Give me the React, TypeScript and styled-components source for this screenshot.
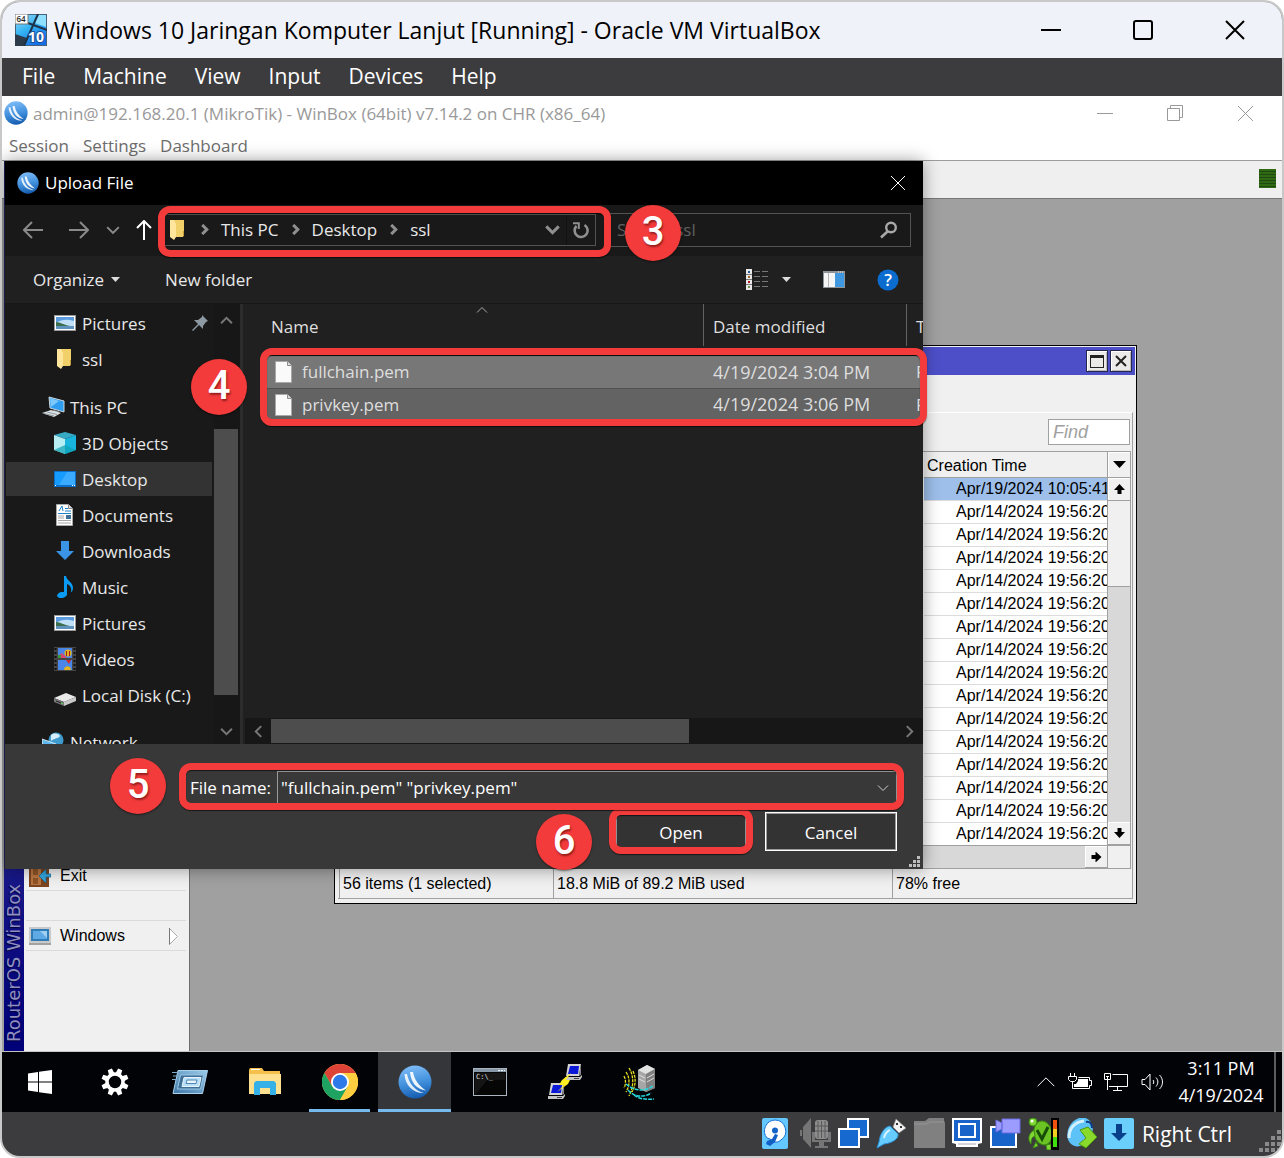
import React, { ReactNode } from 'react';
import styled, { createGlobalStyle, css } from 'styled-components';

const UI = `"Open Sans", "Noto Sans", sans-serif`;
const CLASSIC = `"Liberation Sans", Arial, sans-serif`;
const RED = '#f33b3b';

const GlobalStyle = createGlobalStyle`
  *, *::before, *::after { box-sizing: border-box; }
  body { margin: 0; background: #fff; font-family: ${UI}; }
  button, input { font: inherit; color: inherit; margin: 0; padding: 0; border: 0; background: none; border-radius: 0; }
  svg { display: block; flex: none; }
`;

/* ---------- host window ---------- */

const Frame = styled.div`
  height: 100vh;
  display: flex;
  flex-direction: column;
  border: 2px solid #c8c8c8;
  border-radius: 20px;
  overflow: hidden;
  background: #3c3c3e;
`;

const HostTitle = styled.header`
  display: flex;
  align-items: center;
  height: 56px;
  flex: none;
  padding: 0 37px 0 13px;
  gap: 7px;
  background: #f0f2f9;
  color: #000;
`;

const HostName = styled.h1`
  flex: 1;
  margin: 0;
  font-size: 23px;
  line-height: 32px;
  font-weight: 400;
  white-space: nowrap;
`;

const Controls = styled.div<{ $gap: number }>`
  display: flex;
  align-items: center;
  gap: ${(p) => p.$gap}px;
`;

const IconButton = styled.button`
  display: flex;
  align-items: center;
  justify-content: center;
`;

const HostMenu = styled.nav`
  display: flex;
  align-items: center;
  height: 38px;
  flex: none;
  gap: 28px;
  padding: 0 0 2px 20px;
  font-size: 21px;
  line-height: 28px;
  color: #fff;
`;

const Guest = styled.main`
  position: relative;
  flex: 1;
  min-height: 0;
  display: flex;
  flex-direction: column;
  background: #a0a0a0;
`;

/* ---------- WinBox ---------- */

const BoxTitle = styled.div`
  display: flex;
  align-items: center;
  height: 34px;
  flex: none;
  gap: 5px;
  padding: 0 28px 0 2px;
  background: #fff;
  color: #999;
  font-size: 17px;
`;

const Grow = styled.span`
  flex: 1;
  white-space: nowrap;
`;

const BoxMenu = styled.nav`
  display: flex;
  align-items: center;
  height: 30px;
  flex: none;
  gap: 14px;
  padding: 2px 0 0 7px;
  background: #fff;
  color: #6d6d6d;
  font-size: 17px;
  line-height: 24px;
`;

const BoxToolbar = styled.div`
  display: flex;
  align-items: center;
  justify-content: flex-end;
  height: 39px;
  flex: none;
  padding: 0 6px 2px 0;
  background: #efefef;
  border-top: 1px solid #9c9c9c;
  border-bottom: 1px solid #767676;
`;

const CpuMeter = styled.div`
  width: 17px;
  height: 19px;
  background: repeating-linear-gradient(#2f6a12 0 2px, #1f4a14 2px 3px);
`;

const Workspace = styled.div`
  flex: 1;
  min-height: 0;
  display: flex;
  padding-left: 2px;
  border-bottom: 1px solid #c4c4c4;
  background: #a0a0a0;
`;

const Brand = styled.div`
  width: 20px;
  padding-top: 9px;
  writing-mode: vertical-rl;
  transform: rotate(180deg);
  background: linear-gradient(#000078, #000078 18px, #181888 180px);
  color: #8f8fbd;
  font-family: "DejaVu Sans", sans-serif;
  font-size: 18px;
  line-height: 20px;
  text-shadow: -1px -1px 1px #00003c;
  white-space: nowrap;
`;

const SideMenu = styled.div`
  display: flex;
  flex-direction: column;
  justify-content: flex-end;
  gap: 29px;
  width: 166px;
  padding: 0 3px 100px 2px;
  background: #f0f0f0;
  border-right: 1px solid #6e6e6e;
`;

const SideItem = styled.button`
  display: flex;
  align-items: center;
  gap: 9px;
  height: 31px;
  padding: 1px 8px 0 3px;
  border-top: 1px solid #dadada;
  border-bottom: 1px solid #dadada;
  color: #000;
  font-family: ${CLASSIC};
  font-size: 16px;
  text-align: left;
`;

/* ---------- file list window ---------- */

const FileWindow = styled.section`
  position: absolute;
  left: 332px;
  top: 249px;
  width: 803px;
  height: 559px;
  display: flex;
  flex-direction: column;
  padding: 1px;
  background: #f0f0f0;
  border: 1px solid #000;
  color: #000;
  font-family: ${CLASSIC};
  font-size: 16px;
`;

const FileWindowTitle = styled.div`
  display: flex;
  align-items: center;
  justify-content: flex-end;
  gap: 2px;
  height: 28px;
  flex: none;
  padding-right: 3px;
  background: #4d4fc9;
`;

const BevelButton = styled.button`
  display: flex;
  align-items: center;
  justify-content: center;
  width: 22px;
  height: 22px;
  background: #ece9e9;
  border: 1px solid #26264c;
  box-shadow: inset 1px 1px #fff, inset -1px -1px #b8b8b8;
`;

const Pane = styled.div`
  flex: 1;
  min-height: 0;
  display: flex;
  flex-direction: column;
  margin: 37px 2px 3px;
  padding-right: 1px;
  border-top: 1px solid #fff;
  border-right: 1px solid #a0a0a0;
  border-bottom: 1px solid #a0a0a0;
`;

const FindRow = styled.div`
  display: flex;
  justify-content: flex-end;
  height: 38px;
  flex: none;
  padding: 6px 1px 0 0;
`;

const FindInput = styled.input`
  width: 82px;
  height: 26px;
  padding: 0 4px;
  background: #fff;
  border: 1px solid #a0a0a0;
  font-size: 18px;
  font-style: italic;
  &::placeholder { color: #a0a0a0; opacity: 1; }
`;

const Grid = styled.div`
  display: grid;
  grid-template-columns: 1fr 23px;
  grid-template-rows: 1fr 23px;
  flex: 1;
  min-height: 0;
  border: solid #a0a0a0;
  border-width: 1px 1px 1px 0;
`;

const Rows = styled.div`
  overflow: hidden;
  background: #fff;
`;

const StampTable = styled.table`
  width: 183px;
  margin-left: auto;
  border-collapse: separate;
  border-spacing: 0;
  table-layout: fixed;
  white-space: nowrap;
  th {
    height: 26px;
    padding: 2px 0 0 3px;
    background: #f0f0f0;
    border-bottom: 1px solid #a0a0a0;
    font-weight: 400;
    text-align: left;
  }
`;

const StampCell = styled.td<{ $selected: boolean }>`
  height: 23px;
  padding: 0 0 0 32px;
  overflow: hidden;
  line-height: 20px;
  background: ${(p) => (p.$selected ? '#9dbfea' : '#fff')};
  border-bottom: 1px solid #dcdcdc;
`;

const VBar = styled.div`
  display: flex;
  flex-direction: column;
  background: #d8d8d8;
  border-left: 1px solid #a0a0a0;
`;

const BarButton = styled.button<{ $h?: number }>`
  display: flex;
  align-items: center;
  justify-content: center;
  width: 22px;
  height: ${(p) => p.$h ?? 23}px;
  flex: none;
  background: #f0f0f0;
  border-bottom: 1px solid #a0a0a0;
  box-shadow: inset 1px 1px #fff;
`;

const VThumb = styled.div`
  height: 86px;
  background: #f0f0f0;
  border-bottom: 1px solid #a0a0a0;
`;

const Track = styled.div`
  flex: 1;
`;

const HBar = styled.div`
  display: flex;
  justify-content: flex-end;
  background: #d8d8d8;
  border-top: 1px solid #a0a0a0;
`;

const Corner = styled.div`
  background: #f0f0f0;
  border-top: 1px solid #a0a0a0;
  border-left: 1px solid #a0a0a0;
`;

const StatusRow = styled.div`
  display: grid;
  grid-template-columns: 214px 339px 1fr;
  height: 29px;
  flex: none;
  padding: 0 0 2px 1px;
`;

const StatusCell = styled.span`
  padding: 0 3px;
  line-height: 29px;
  border-left: 1px solid #a0a0a0;
`;

/* ---------- upload dialog ---------- */

const Dialog = styled.section`
  position: absolute;
  left: 2px;
  top: 65px;
  width: 919px;
  height: 708px;
  display: flex;
  flex-direction: column;
  border-left: 1px solid #1c1c48;
  background: #202020;
  box-shadow: 0 0 16px rgba(0, 0, 0, 0.4);
  color: #e8e8e8;
  font-size: 17px;
  line-height: 24px;
`;

const DialogTitle = styled.header`
  display: flex;
  align-items: center;
  height: 44px;
  flex: none;
  gap: 6px;
  padding: 0 17px 0 12px;
  background: #000;
  color: #fff;
`;

const NavRow = styled.div`
  display: flex;
  align-items: center;
  height: 51px;
  flex: none;
  padding: 0 12px 2px 18px;
  background: #191919;
`;

const NavButtons = styled.div`
  display: grid;
  grid-template-columns: 46px 37px 28px 20px;
  justify-items: start;
  align-items: center;
  width: 131px;
  margin-right: 10px;
`;

const Address = styled.div`
  display: flex;
  align-items: center;
  width: 432px;
  height: 32px;
  padding-left: 4px;
  border: 1px solid #535353;
`;

const Crumbs = styled.div`
  display: flex;
  align-items: center;
  flex: 1;
  margin-left: 14px;
`;

const Crumb = styled.button`
  padding: 0 11px;
`;

const RefreshCell = styled.div`
  display: flex;
  align-items: center;
  height: 30px;
  margin-left: 6px;
  padding: 0 5px;
  border-left: 1px solid #111;
`;

const SearchBox = styled.label`
  display: flex;
  align-items: center;
  flex: 1;
  height: 34px;
  margin-left: 10px;
  padding: 0 12px 0 10px;
  border: 1px solid #535353;
  input { flex: 1; min-width: 0; }
  input::placeholder { color: #606060; opacity: 1; }
`;

const ToolRow = styled.div`
  display: flex;
  align-items: center;
  height: 48px;
  flex: none;
  gap: 45px;
  padding: 0 24px 0 28px;
  border-bottom: 1px solid #171717;
`;

const ToolButton = styled.button<{ $gap?: number }>`
  display: flex;
  align-items: center;
  gap: ${(p) => p.$gap ?? 7}px;
`;

const Body = styled.div`
  display: flex;
  flex: 1;
  min-height: 0;
  overflow: hidden;
`;

const Tree = styled.div`
  width: 209px;
  padding: 1px 2px 0 0;
  background: #191919;
  overflow: hidden;
`;

const TreeGroup = styled.div`
  display: flex;
  flex-direction: column;
  margin-bottom: 12px;
`;

const TreeItem = styled.button<{ $root?: boolean; $selected?: boolean }>`
  display: flex;
  align-items: center;
  gap: ${(p) => (p.$root ? 5 : 6)}px;
  height: 34px;
  margin: 1px 0 1px 1px;
  padding: 0 4px 0 ${(p) => (p.$root ? 36 : 48)}px;
  text-align: left;
  white-space: nowrap;
  ${(p) => p.$selected && css`background: #333;`}
`;

const TreeLabel = styled.span`
  flex: 1;
  padding-top: 1px;
`;

const TreeScroll = styled.div`
  display: flex;
  flex-direction: column;
  width: 26px;
  background: #171717;
`;

const ScrollArrow = styled.button<{ $w: number; $h: number }>`
  display: flex;
  align-items: center;
  justify-content: center;
  flex: none;
  width: ${(p) => p.$w}px;
  height: ${(p) => p.$h}px;
`;

const TreeGap = styled.div`
  height: 92px;
`;

const TreeThumb = styled.div`
  width: 24px;
  height: 266px;
  background: #4d4d4d;
`;

const Splitter = styled.div`
  width: 3px;
  background: #2c2c2c;
`;

const Content = styled.div`
  flex: 1;
  min-width: 0;
  display: flex;
  flex-direction: column;
`;

const FileArea = styled.div`
  flex: 1;
  min-height: 0;
  padding-left: 24px;
  overflow: hidden;
`;

const FileTable = styled.table`
  width: 100%;
  table-layout: fixed;
  border-collapse: collapse;
  white-space: nowrap;
  text-align: left;
  th, td { padding: 0; overflow: hidden; font-weight: 400; }
  th { height: 52px; vertical-align: top; color: #dedede; }
  td { height: 32px; padding: 1px 0 0 9px; color: #dedede; }
  td:first-child { padding-left: 8px; }
`;

const DateText = styled.time`
  font-size: 18px;
`;

const HeadCell = styled.div<{ $pad: number; $last?: boolean }>`
  position: relative;
  height: 42px;
  padding-left: ${(p) => p.$pad}px;
  line-height: 46px;
  ${(p) => !p.$last && css`border-right: 1px solid #636363;`}
`;

const SortMark = styled.span`
  position: absolute;
  top: 0;
  left: 48%;
`;

const FileTr = styled.tr<{ $hover?: boolean }>`
  background: ${(p) => (p.$hover ? '#777' : '#636363')};
  border-bottom: 1px solid #505050;
`;

const FileName = styled.div`
  display: flex;
  align-items: center;
  gap: 9px;
`;

const HScroll = styled.div`
  display: flex;
  height: 26px;
  flex: none;
  margin-left: 2px;
  background: #171717;
`;

const HThumb = styled.div`
  width: 418px;
  height: 24px;
  margin-top: 1px;
  background: #4d4d4d;
`;

const Footer = styled.footer`
  display: flex;
  flex-direction: column;
  gap: 8px;
  height: 125px;
  flex: none;
  padding: 27px 26px 0 185px;
  background: #383838;
  color: #fff;
`;

const FieldRow = styled.div`
  display: flex;
  align-items: center;
  height: 33px;
`;

const FieldLabel = styled.label`
  width: 87px;
`;

const Combo = styled.div`
  display: flex;
  align-items: center;
  flex: 1;
  height: 33px;
  padding: 0 7px 0 3px;
  border: 1px solid #9b9b9b;
  input { flex: 1; min-width: 0; padding-top: 1px; outline: none; }
`;

const ButtonRow = styled.div`
  display: flex;
  justify-content: flex-end;
  gap: 18px;
`;

const DialogButton = styled.button`
  width: 132px;
  height: 39px;
  padding-top: 2px;
  background: #333;
  border: 1px solid #fff;
  box-shadow: inset 0 0 0 1px #9b9b9b;
  text-align: center;
`;

const Grip = styled.span`
  position: absolute;
  right: 3px;
  bottom: 2px;
`;

/* ---------- annotations over the dialog ---------- */

const Highlight = styled.div<{ $x: number; $y: number; $w: number; $h: number }>`
  position: absolute;
  left: ${(p) => p.$x}px;
  top: ${(p) => p.$y}px;
  width: ${(p) => p.$w}px;
  height: ${(p) => p.$h}px;
  border: 7px solid ${RED};
  border-radius: 12px;
  box-shadow: 0 1px 1px rgba(0, 0, 0, 0.6), inset 0 1px 1px rgba(0, 0, 0, 0.6);
  pointer-events: none;
`;

const Badge = styled.div<{ $x: number; $y: number }>`
  position: absolute;
  left: ${(p) => p.$x}px;
  top: ${(p) => p.$y}px;
  width: 56px;
  height: 56px;
  border-radius: 50%;
  background: ${RED};
  box-shadow: 0 1px 2px rgba(0, 0, 0, 0.5);
  color: #fff;
  font-family: Roboto, sans-serif;
  font-size: 40px;
  line-height: 54px;
  font-weight: 500;
  text-align: center;
  text-shadow: 1px 2px 2px rgba(60, 0, 0, 0.5);
`;

/* ---------- taskbar and host status ---------- */

const Taskbar = styled.div`
  display: flex;
  align-items: stretch;
  height: 60px;
  flex: none;
  background: #020307;
  color: #fff;
`;

const Apps = styled.div`
  display: flex;
  flex: 1;
  gap: 2px;
  padding-left: 1px;
`;

const AppButton = styled.button<{ $open?: boolean; $active?: boolean }>`
  position: relative;
  display: flex;
  align-items: center;
  justify-content: center;
  width: 73px;
  background: ${(p) => (p.$active ? '#35363a' : 'transparent')};
  ${(p) =>
    (p.$open || p.$active) &&
    css`
      &::after {
        content: '';
        position: absolute;
        left: ${p.$active ? 0 : 6}px;
        right: ${p.$active ? 0 : 6}px;
        bottom: 0;
        height: 3px;
        background: #76b9ed;
      }
    `}
`;

const Tray = styled.div`
  display: flex;
  align-items: center;
  gap: 12px;
  padding-right: 4px;
`;

const Clock = styled.div`
  display: flex;
  flex-direction: column;
  justify-content: center;
  width: 106px;
  font-size: 18px;
  line-height: 27px;
  text-align: center;
`;

const ShowDesktop = styled.button`
  align-self: stretch;
  width: 8px;
  border-left: 2px solid #5c5c5c;
`;

const HostStatus = styled.footer`
  position: relative;
  display: flex;
  align-items: center;
  justify-content: flex-end;
  gap: 7px;
  height: 44px;
  flex: none;
  padding-right: 50px;
  color: #fff;
  font-size: 21px;
  line-height: 28px;
`;

const StatusGrid = styled.div`
  display: grid;
  grid-template-columns: repeat(10, 31px);
  gap: 7px;
`;

const CornerGrip = styled.span`
  position: absolute;
  right: 0;
  bottom: 3px;
`;

/* ---------- drawings ---------- */

const Svg = ({ w, h, vb, children }: { w: number; h: number; vb?: string; children?: ReactNode }) => (
  <svg width={w} height={h} viewBox={vb ?? `0 0 ${w} ${h}`} fill="none" aria-hidden="true">
    {children}
  </svg>
);

const Cross = ({ size, color, width = 1 }: { size: number; color: string; width?: number }) => (
  <Svg w={size} h={size}>
    <path d={`M1 1L${size - 1} ${size - 1}M${size - 1} 1L1 ${size - 1}`} stroke={color} strokeWidth={width} />
  </Svg>
);

const Chevron = ({ dir, size, color, width = 2 }: { dir: 'up' | 'down' | 'left' | 'right'; size: number; color: string; width?: number }) => {
  const d = { up: 'M1 8.500L6 3.500L11 8.500', down: 'M1 3.500L6 8.500L11 3.500', left: 'M8.500 1L3.500 6L8.500 11', right: 'M3.500 1L8.500 6L3.500 11' }[dir];
  return (
    <Svg w={size} h={size} vb="0 0 12 12">
      <path d={d} stroke={color} strokeWidth={(width * 12) / size} />
    </Svg>
  );
};

const MikroTik = ({ size, id }: { size: number; id: string }) => (
  <Svg w={size} h={size} vb="0 0 34 34">
    <defs>
      <linearGradient id={id} x1="0.4" y1="0" x2="0.6" y2="1">
        <stop offset="0" stopColor="#7dbcf8" />
        <stop offset="0.55" stopColor="#3f8edb" />
        <stop offset="1" stopColor="#1259ad" />
      </linearGradient>
    </defs>
    <circle cx="17" cy="17" r="16.500" fill={`url(#${id})`} />
    <path d="M6.500 9C7 20 15 28.500 26 28C17 25.500 11 19 9 9z" fill="#fff" opacity="0.85" />
    <path d="M12 7C13 17 18 24.500 28 25.500C21 21 16.500 15 15 7z" fill="#fff" opacity="0.9" />
  </Svg>
);

const VmIcon = () => (
  <Svg w={32} h={32}>
    <defs>
      <linearGradient id="vm" x1="0" y1="0" x2="0.6" y2="1">
        <stop offset="0" stopColor="#9fdcfa" />
        <stop offset="0.5" stopColor="#35b4f3" />
        <stop offset="1" stopColor="#1570e8" />
      </linearGradient>
    </defs>
    <rect x="0.500" y="0.500" width="31" height="31" fill="url(#vm)" stroke="#45627a" />
    <path d="M0 20l12 4 -3 8H0z" fill="#2d3a49" />
    <path d="M24 1h7v12l-11-4z" fill="#8fe0ff" />
    <path d="M13 9l19 7M23 0L9 32" stroke="#1d3147" strokeWidth="2" />
    <rect width="13" height="10" fill="#fff" stroke="#777" />
    <text x="1.500" y="8" fontFamily="Open Sans" fontSize="8" fontWeight="600" fill="#222">64</text>
    <text x="13" y="28" fontFamily="Open Sans" fontSize="14" fontWeight="700" fill="#fff" stroke="#1d4f94" strokeWidth="2" paintOrder="stroke">10</text>
  </Svg>
);

const FolderMini = () => (
  <Svg w={16} h={22}>
    <path d="M5 1h10v15l-1 2H5z" fill="#f1cf69" />
    <path d="M1 1h4l2 4v13l-2 3-4-3z" fill="#ffe69c" />
    <path d="M14 12h1v5h-1z" fill="#c99d3c" />
  </Svg>
);

const TreeFolderIcon = () => (
  <Svg w={22} h={22}>
    <path d="M7 1h10v15l-1 2H7z" fill="#f1cf69" />
    <path d="M3 1h4l2 4v13l-2 3-4-3z" fill="#ffe69c" />
    <path d="M16 12h1v5h-1z" fill="#c99d3c" />
  </Svg>
);

const PictureIcon = () => (
  <Svg w={22} h={16}>
    <rect x="0.500" y="0.500" width="21" height="15" fill="#fff" stroke="#9a9a9a" />
    <rect x="2" y="2" width="18" height="12" fill="#5b9be0" />
    <path d="M2 8c6-4 11-4 18-2v5H2z" fill="#bfe0f7" />
    <path d="M2 7c4 0 8 3 14 4H2z" fill="#3c6e4c" />
    <path d="M2 11h18v3H2z" fill="#5f93bd" />
  </Svg>
);

const PcIcon = () => (
  <Svg w={23} h={22}>
    <path d="M7 1l15 4v11L8 12z" fill="#2f9df0" stroke="#cbd8e0" />
    <path d="M8 2l9 3-8 6z" fill="#7cc8fa" />
    <path d="M12 14l6 2-2 2-6-2z" fill="#8b949b" />
    <path d="M0 17l9-3 10 3-7 4z" fill="#dce1e4" />
    <path d="M2 17.500l10 2.500M5 16l10 2.500" stroke="#8b949b" />
  </Svg>
);

const CubeIcon = () => (
  <Svg w={22} h={22}>
    <path d="M11 0l11 3-11 4L0 3z" fill="#36a9c4" />
    <path d="M0 3l11 4v15L0 18z" fill="#b7eef3" />
    <path d="M22 3L11 7v15l11-4z" fill="#18b4dd" />
    <path d="M0 18l11-5 11 5-11 4z" fill="#0a9fb4" opacity="0.7" />
  </Svg>
);

const DesktopIcon = () => (
  <Svg w={22} h={16}>
    <rect width="22" height="16" fill="#0a6fc9" />
    <rect x="1" y="1" width="20" height="13" fill="#169bff" />
    <path d="M13 1h8v13H5z" fill="#3babff" />
    <path d="M1 14h1v1H1zM18 14h1v1h-1zM20 14h1v1h-1z" fill="#fff" />
  </Svg>
);

const DocIcon = () => (
  <Svg w={22} h={22}>
    <path d="M2.500 .5h12l4 4v17h-16z" fill="#fff" stroke="#aaa" />
    <path d="M14.500 .5v4h4" stroke="#888" fill="#ddd" />
    <path d="M5 7l3-5 1 5M11 4.500h3M11 7h6M4 9.500h13" stroke="#1c7fc7" />
    <path d="M4 12h6M4 14h6M4 16.500h13M4 19h13" stroke="#a6a6a6" />
    <rect x="12" y="11" width="5" height="4" fill="#3d6f96" />
  </Svg>
);

const DownIcon = () => (
  <Svg w={22} h={20}>
    <path d="M7 0h8v10h5L11 19 2 10h5z" fill="#3a93e4" />
  </Svg>
);

const MusicIcon = () => (
  <Svg w={22} h={22}>
    <ellipse cx="8" cy="19" rx="5" ry="3" fill="#0a9cf5" transform="rotate(-12 8 19)" />
    <path d="M10 0h2c1 5 7 6 7 12 0 2-1 4-2 4 1-4-1-7-4-8v11h-3z" fill="#0a9cf5" />
  </Svg>
);

const VideoIcon = () => (
  <Svg w={22} h={24}>
    <rect width="22" height="24" fill="#454545" />
    <path d="M1.500 1v22M20.500 1v22" stroke="#111" strokeWidth="2" strokeDasharray="2 2" />
    <rect x="4" y="1" width="14" height="10" fill="#4a86e8" />
    <rect x="4" y="13" width="14" height="10" fill="#4a86e8" />
    <circle cx="14" cy="6" r="3.500" fill="#e4b322" />
    <path d="M12 4h1v5h-1zM15 4h1v5h-1z" fill="#a02020" />
    <path d="M4 9l4-3 5 5H4z" fill="#d8496b" />
    <path d="M4 8h3v3H4z" fill="#3c9b3c" />
    <path d="M12 13h5l-2 4z" fill="#d12a2a" />
    <path d="M10 23c0-5 7-5 7 0z" fill="#e4b322" />
  </Svg>
);

const DiskIcon = () => (
  <Svg w={22} h={22}>
    <path d="M0 14l12-5 10 4-12 5z" fill="#e9e9e9" />
    <path d="M0 14l10 4v4L0 18z" fill="#777" />
    <path d="M10 18l12-5v4l-12 5z" fill="#c9c9c9" />
    <path d="M2 17l5 2" stroke="#222" />
    <path d="M7 19h2v1H7z" fill="#4fd04f" />
  </Svg>
);

const NetIcon = () => (
  <Svg w={23} h={22}>
    <circle cx="14" cy="9" r="7.500" fill="#3f9bce" />
    <path d="M9 4c4-3 8-1 9 1-2 3-6 2-9 5z" fill="#d5eefa" />
    <path d="M0 8l14 5v8L1 17z" fill="#5cb8ef" stroke="#cfe3ee" />
  </Svg>
);

const PinIcon = () => (
  <Svg w={16} h={16}>
    <path d="M10 0l6 6-2 1-3 4v3l-4-4-6 6-1-1 6-6-4-4h4l4-3z" fill="#8d99a3" />
  </Svg>
);

const FileIcon = () => (
  <Svg w={18} h={22}>
    <path d="M.5.500h12l4 4v17H.5z" fill="#fafafa" stroke="#a8a8a8" />
    <path d="M12.500.500v4h4" fill="#ddd" stroke="#8c8c8c" />
  </Svg>
);

const ArrowIcon = ({ dir, color }: { dir: 'left' | 'right' | 'up'; color: string }) => {
  const d = { left: 'M20 10H1M9 2L1 10l8 8', right: 'M0 10h19M11 2l8 8-8 8', up: 'M10 20V1M3 8l7-7 7 7' }[dir];
  return (
    <Svg w={20} h={20}>
      <path d={d} stroke={color} strokeWidth="2" />
    </Svg>
  );
};

const Caret = ({ color }: { color: string }) => (
  <Svg w={9} h={5}>
    <path d="M0 0h9L4.500 5z" fill={color} />
  </Svg>
);

const StubArrow = ({ turn }: { turn: number }) => (
  <Svg w={11} h={10} vb="0 0 11 10">
    <path d="M5.500 0L11 6H7.500v4h-4V6H0z" fill="#000" transform={`rotate(${turn} 5.500 5)`} />
  </Svg>
);

const ViewIcon = () => (
  <Svg w={22} h={21}>
    <rect width="6" height="21" fill="#e8e8e8" />
    <path d="M2 2h2v2H2z" fill="#2a5d92" />
    <path d="M2 7h2v2H2z" fill="#a0662c" />
    <path d="M2 12h2v2H2z" fill="#b01c1c" />
    <path d="M2 17h2v2H2z" fill="#6b9350" />
    <path d="M0 5.500h6M0 10.500h6M0 15.500h6" stroke="#777" />
    <path d="M8 2.500h6M16 2.500h6M8 7.500h6M16 7.500h6M8 12.500h6M16 12.500h6M8 17.500h6M16 17.500h6" stroke="#777" />
  </Svg>
);

const PaneIcon = () => (
  <Svg w={22} h={17}>
    <rect width="22" height="17" fill="#8f9499" />
    <path d="M1 2h11v14H1z" fill="#f5f5f5" />
    <path d="M5.500 2v14" stroke="#b9b9b9" />
    <path d="M12 2h9v14h-9z" fill="#3f97e0" />
    <path d="M15 1h1M17 1h1M19 1h1" stroke="#eee" />
  </Svg>
);

const HelpIcon = () => (
  <Svg w={22} h={22}>
    <circle cx="11" cy="11" r="10.500" fill="#0a6cce" />
    <text x="11" y="17" textAnchor="middle" fontFamily="Open Sans" fontSize="17" fontWeight="600" fill="#fff">?</text>
  </Svg>
);

const SearchIcon = () => (
  <Svg w={18} h={18}>
    <circle cx="11" cy="6.500" r="4.800" stroke="#a8a8a8" strokeWidth="2.400" />
    <path d="M7.500 10.500L1 16.500" stroke="#a8a8a8" strokeWidth="2.600" />
  </Svg>
);

const RefreshIcon = () => (
  <Svg w={18} h={18}>
    <path d="M12.500 4A6.500 6.500 0 1 1 4.500 5" stroke="#8f8f8f" strokeWidth="2.600" />
    <path d="M1 2.200h5.800v5.800" stroke="#8f8f8f" strokeWidth="2" />
  </Svg>
);

const DoorIcon = () => (
  <Svg w={22} h={24}>
    <path d="M0 0h20v23H0z" fill="#7c4420" />
    <path d="M2 2h10v19H2z" fill="#b87541" />
    <path d="M4 5h5v6H4zM4 14h5v6H4z" fill="#8f5426" />
    <path d="M22 13v-3h-5V5l-7 7 7 7v-6z" fill="#35a5dc" stroke="#16648f" strokeWidth="0.700" />
  </Svg>
);

const MonitorIcon = () => (
  <Svg w={22} h={18}>
    <rect width="22" height="18" fill="#c9c9c9" />
    <path d="M0 16h22v2H0z" fill="#a2a2a2" />
    <rect x="2" y="2" width="18" height="12" fill="#2f7db8" />
    <rect x="4" y="4" width="14" height="8" fill="#5fa9e4" />
    <path d="M11 4h7v7z" fill="#9fd0f2" />
  </Svg>
);

const WinLogo = () => (
  <Svg w={24} h={24}>
    <path d="M0 3.500l10-1.500v9.500H0zM11 1.800L24 0v11.500H11zM0 12.500h10V22L0 20.500zM11 12.500h13V24l-13-1.800z" fill="#fff" />
  </Svg>
);

const GearIcon = () => (
  <Svg w={28} h={28} vb="-14 -14 28 28">
    <circle r="8" stroke="#fff" strokeWidth="3.600" />
    {[22.5, 67.5, 112.5, 157.5, 202.5, 247.5, 292.5, 337.5].map((a) => (
      <path key={a} d="M-2.800 -8.500L-2.200 -13.600H2.200L2.800 -8.500z" fill="#fff" transform={`rotate(${a})`} />
    ))}
  </Svg>
);

const RunIcon = () => (
  <Svg w={36} h={24}>
    <defs>
      <linearGradient id="run" x1="0" y1="1" x2="1" y2="0">
        <stop offset="0" stopColor="#3f78a8" />
        <stop offset="1" stopColor="#9ccbea" />
      </linearGradient>
    </defs>
    <path d="M6 .5h29.500l-5 23H1z" fill="url(#run)" stroke="#a9d2ec" />
    <path d="M8.500 5h23l-3 14h-23z" fill="#3f6f97" stroke="#9cc8e6" />
    <path d="M12 7.500h17l-2 9H10z" fill="#b9dff7" stroke="#e6f4fc" />
    <path d="M15 10h10l-1 3.500H14z" fill="#e9f6fd" stroke="#4d86b3" />
    <path d="M0 2.500h7M1 6h5M0 9.500h4" stroke="#7ea9c6" />
  </Svg>
);

const ExplorerIcon = () => (
  <Svg w={32} h={28}>
    <path d="M0 2l1-2h12l2 3h16v5H0z" fill="#f5c04a" />
    <path d="M2 1.500h9" stroke="#fff" />
    <path d="M0 6h32v20H0z" fill="#ffe08f" />
    <path d="M5 27V15l2-2h18l2 2v12h-6v-7H11v7z" fill="#36b1e8" />
  </Svg>
);

const ChromeIcon = () => (
  <Svg w={36} h={36} vb="-18 -18 36 36">
    <circle r="18" fill="#ffcd40" />
    <path d="M-15.600 -9A18 18 0 0 1 15.600 -9H0L-7.800 4.500z" fill="#dd4437" />
    <path d="M-15.600 -9A18 18 0 0 0 0 18L7.800 4.500H0L-7.800 4.500z" fill="#1ea362" />
    <path d="M0 -9H15.600A18 18 0 0 1 0 18L7.800 4.500z" fill="#ffcd40" />
    <circle r="9" fill="#fff" />
    <circle r="7.200" fill="#2d79ea" />
  </Svg>
);

const CmdIcon = () => (
  <Svg w={34} h={28}>
    <rect x="0.500" y="0.500" width="33" height="27" fill="#060606" stroke="#a9b4bf" />
    <path d="M3 26L14 12h18V5H2v21z" fill="#1c1c1c" opacity="0.7" />
    <path d="M1 1h32v3H1z" fill="#8798a8" />
    <path d="M25 2.500h2M28 2.500h2M31 2.500h1" stroke="#fff" />
    <text x="3" y="11" fontFamily="DejaVu Sans Mono" fontSize="7" fill="#ddd">C:\_</text>
  </Svg>
);

const PuttyIcon = () => (
  <Svg w={36} h={36}>
    {[[18, 0], [1, 19]].map(([x, y]) => (
      <g key={x} transform={`translate(${x} ${y})`}>
        <path d="M3 0h13l-2 12H1z" fill="#d4d4d4" />
        <path d="M5 2h9l-1 8H3z" fill="#0b18d8" />
        <path d="M16 0v11l-2 1z" fill="#888" />
        <path d="M0 13h15l2-2v2l-2 3H0z" fill="#c4c4c4" />
        <path d="M9 14.500h5" stroke="#444" />
      </g>
    ))}
    <path d="M24 9l-9 7-3 5h5l-7 7 11-8 2-4h-4z" fill="#ffee20" />
  </Svg>
);

const ServerIcon = () => (
  <Svg w={34} h={37}>
    <path d="M15 6l9-5 8 4v19l-9 4-8-4z" fill="#a6a6a6" />
    <path d="M15 6l9-5 8 4-9 5z" fill="#e2e2e2" />
    <path d="M23 10l9-5v19l-9 4z" fill="#808080" />
    <path d="M16 11l6 3M16 15l6 3M24 14l7-4M24 18l7-4" stroke="#dedede" />
    <path d="M6 4c5 8 5 18 0 28M3 8c4 6 4 13 0 20M10 7c3 7 3 14-1 21M1 12c2 4 2 8 0 12" stroke="#e8e020" strokeWidth="1.300" strokeDasharray="3 1" />
    <path d="M3 20c8 7 18 8 27 2M5 26c6 7 16 8 23 3M11 31c5 4 13 5 20 4" stroke="#27d9df" strokeWidth="1.500" strokeDasharray="4 1" />
  </Svg>
);

const BatteryIcon = () => (
  <Svg w={24} h={18}>
    <path d="M2.500 0v4M6.500 0v4M.5 3.500h8v3l-2 2h-4l-2-2zM4.500 8.500v7h17v-3h2v-5h-2v-3h-11" stroke="#fff" />
    <path d="M10 6h10v8H6v-3h2l2-3z" fill="#fff" />
  </Svg>
);

const EthernetIcon = () => (
  <Svg w={25} h={20}>
    <path d="M8.500 2.500h15v12H5M13.500 14.500v4M9 18.500h9M.5 1.500h6v6h-6zM3.500 4v14M2 4.500h3" stroke="#fff" />
  </Svg>
);

const SoundIcon = () => (
  <Svg w={23} h={20}>
    <path d="M1 7.500h3l5-5.500v16l-5-5.500H1z" stroke="#fff" />
    <path d="M12 8c1 1 1 3 0 4M15 5.500c2.500 3 2.500 6 0 9M18.500 3c4 4 4 10 0 14" stroke="#fff" />
  </Svg>
);

const StatusIcons = () => (
  <StatusGrid>
    <Svg w={26} h={31}>
      <rect width="26" height="31" rx="2" fill="#64c8ff" />
      <path d="M13 2a11 11 0 0 0-8 18l3 1 4 3h4l3-2A11 11 0 0 0 13 2z" fill="#fff" stroke="#1672d4" />
      <circle cx="13" cy="12.500" r="3" fill="#1464c8" />
      <path d="M13 16l3 1-3 7-5 4-4-2 1-3 5-2z" fill="#1260c4" />
    </Svg>
    <Svg w={31} h={31}>
      <path d="M3 9l8-9v30l-8-9zM0 12h2v6H0z" fill="#757575" />
      <rect x="15" y="2" width="13" height="19" rx="3" fill="#8d8d8d" />
      <path d="M18 3v17M21.500 3v17M25 3v17M15 8h13M15 13h13" stroke="#5b5b5b" />
      <path d="M12 14h3v8h13v-8h3v10h-7v4h4v2H15v-2h4v-4h-7z" fill="#767676" />
    </Svg>
    <Svg w={31} h={31}>
      <rect x="10" y="1" width="20" height="18" fill="#1669cf" stroke="#fff" strokeWidth="2" />
      <rect x="1" y="11" width="20" height="18" fill="#1669cf" stroke="#fff" strokeWidth="2" />
    </Svg>
    <Svg w={31} h={31}>
      <path d="M20 1l10 9-7 5-6-6z" fill="#f2f2f2" stroke="#888" strokeWidth="0.600" />
      <path d="M20 5h2v2h-2zM24 8h2v2h-2z" fill="#333" />
      <path d="M14 8l8 8c1 5-6 9-14 10L1 30l2-6C4 16 8 9 14 8z" fill="#66ccff" stroke="#2b8fd6" />
      <path d="M8 20c1-4 3-7 6-8" stroke="#d6f2ff" strokeWidth="2" />
    </Svg>
    <Svg w={31} h={31}>
      <path d="M0 3h11l4-3h15v5h1v25H0z" fill="#808080" />
      <path d="M0 6h12l4-2h15" stroke="#969696" />
    </Svg>
    <Svg w={31} h={31}>
      <path d="M0 0h30v25l-4 1v3H4v-3l-4-1z" fill="#fff" />
      <rect x="2" y="2" width="26" height="21" fill="#1763c9" />
      <rect x="7" y="6" width="16" height="13" stroke="#fff" strokeWidth="2" />
      <path d="M6 26h18" stroke="#aab" />
    </Svg>
    <Svg w={31} h={31}>
      <rect x="1" y="9" width="25" height="20" fill="#1763c9" stroke="#fff" strokeWidth="2" />
      <path d="M12 1h18v14H12zM12 5L6 2v12l6-3z" fill="#9c9cff" stroke="#6a6adf" />
    </Svg>
    <Svg w={32} h={32}>
      <ellipse cx="15" cy="15" rx="9" ry="12" fill="#6cc424" stroke="#3a8a10" transform="rotate(-12 15 15)" />
      <ellipse cx="5" cy="4" rx="4" ry="4" fill="#7fd634" stroke="#3a8a10" />
      <path d="M6 12c-5 3-7 9-3 14 0-5 1-7 4-8zM8 24l-3 6 5-2zM18 27l1 5h4v-6z" fill="#7fd634" stroke="#3a8a10" />
      <path d="M9 12l5 9 6-12" stroke="#164d08" strokeWidth="3" />
      <circle cx="4" cy="3" r="1.500" fill="#fff" />
      <rect x="23" y="0" width="8" height="32" fill="#000" />
      <path d="M25 2h4v9h-4z" fill="#f05010" />
      <path d="M25 11h4v8h-4z" fill="#f3d020" />
      <path d="M25 19h4v10h-4z" fill="#40e010" />
    </Svg>
    <Svg w={31} h={31}>
      <ellipse cx="14" cy="14" rx="12" ry="15" fill="#5cc2f7" transform="rotate(28 14 14)" />
      <path d="M3 20C3 10 9 4 18 3" stroke="#d4f0fd" strokeWidth="3" />
      <path d="M20 4c4-1 6 2 6 6" stroke="#0c3c88" strokeWidth="2" />
      <path d="M14 12l8-3 9 10-11 11-7-4 7-6z" fill="#8ada2c" stroke="#4b9b10" />
    </Svg>
    <Svg w={31} h={31}>
      <rect width="30" height="31" rx="2" fill="#6ad0fb" />
      <path d="M12 6h6v9h5l-8 8-8-8h5z" fill="#08408c" />
    </Svg>
  </StatusGrid>
);

const tree = {
  pinned: [
    { name: 'Pictures', icon: <PictureIcon />, pin: true },
    { name: 'ssl', icon: <TreeFolderIcon />, pin: false },
  ],
  pc: [
    { name: '3D Objects', icon: <CubeIcon /> },
    { name: 'Desktop', icon: <DesktopIcon /> },
    { name: 'Documents', icon: <DocIcon /> },
    { name: 'Downloads', icon: <DownIcon /> },
    { name: 'Music', icon: <MusicIcon /> },
    { name: 'Pictures', icon: <PictureIcon /> },
    { name: 'Videos', icon: <VideoIcon /> },
    { name: 'Local Disk (C:)', icon: <DiskIcon /> },
  ],
};

const crumbs = ['This PC', 'Desktop', 'ssl'];

const stamps = ['Apr/19/2024 10:05:41', ...Array.from({ length: 15 }, () => 'Apr/14/2024 19:56:20')];

const files = [
  { name: 'fullchain.pem', date: '4/19/2024 3:04 PM' },
  { name: 'privkey.pem', date: '4/19/2024 3:06 PM' },
];

const GripDots = ({ size, color }: { size: number; color: string }) => {
  const n = size > 12 ? 4 : 3;
  const step = size / n;
  const dots: number[][] = [];
  for (let r = 0; r < n; r++) for (let c = n - 1 - r; c < n; c++) dots.push([c * step, r * step]);
  return (
    <Svg w={size} h={size}>
      {dots.map(([x, y]) => (
        <rect key={`${x}-${y}`} x={x + 1} y={y + 1} width={n === 4 ? 4 : 3} height={n === 4 ? 4 : 3} fill={color} />
      ))}
    </Svg>
  );
};

const FileListWindow = () => (
  <FileWindow aria-label="File List">
    <FileWindowTitle>
      <BevelButton aria-label="Maximize">
        <Svg w={14} h={13}><rect x="0.500" y="0.500" width="13" height="12" stroke="#222" /><path d="M0 2h14" stroke="#222" strokeWidth="2" /></Svg>
      </BevelButton>
      <BevelButton aria-label="Close"><Cross size={12} color="#222" width={2} /></BevelButton>
    </FileWindowTitle>
    <Pane>
      <FindRow><FindInput placeholder="Find" aria-label="Find" /></FindRow>
      <Grid>
        <Rows>
          <StampTable>
            <thead><tr><th>Creation Time</th></tr></thead>
            <tbody>
              {stamps.map((s, i) => (
                <tr key={i}><StampCell $selected={i === 0}>{s}</StampCell></tr>
              ))}
            </tbody>
          </StampTable>
        </Rows>
        <VBar>
          <BarButton $h={26} aria-label="Columns"><Svg w={13} h={7}><path d="M0 0h13L6.500 7z" fill="#000" /></Svg></BarButton>
          <BarButton aria-label="Scroll up"><StubArrow turn={0} /></BarButton>
          <VThumb />
          <Track />
          <BarButton aria-label="Scroll down"><StubArrow turn={180} /></BarButton>
        </VBar>
        <HBar><BarButton $h={22} aria-label="Scroll right"><StubArrow turn={90} /></BarButton></HBar>
        <Corner />
      </Grid>
      <StatusRow>
        <StatusCell>56 items (1 selected)</StatusCell>
        <StatusCell>18.8 MiB of 89.2 MiB used</StatusCell>
        <StatusCell>78% free</StatusCell>
      </StatusRow>
    </Pane>
  </FileWindow>
);

const UploadDialog = () => (
  <Dialog role="dialog" aria-label="Upload File">
    <DialogTitle>
      <MikroTik size={22} id="mt-dialog" />
      <Grow>Upload File</Grow>
      <IconButton aria-label="Close"><Cross size={16} color="#fff" /></IconButton>
    </DialogTitle>
    <NavRow>
      <NavButtons>
        <IconButton aria-label="Back"><ArrowIcon dir="left" color="#8a8a8a" /></IconButton>
        <IconButton aria-label="Forward"><ArrowIcon dir="right" color="#8a8a8a" /></IconButton>
        <IconButton aria-label="Recent"><Chevron dir="down" size={14} color="#8a8a8a" /></IconButton>
        <IconButton aria-label="Up"><ArrowIcon dir="up" color="#fff" /></IconButton>
      </NavButtons>
      <Address>
        <FolderMini />
        <Crumbs>
          {crumbs.map((c) => (
            <React.Fragment key={c}>
              <Chevron dir="right" size={11} color="#8f8f8f" width={3} />
              <Crumb>{c}</Crumb>
            </React.Fragment>
          ))}
        </Crumbs>
        <IconButton aria-label="Previous locations"><Chevron dir="down" size={15} color="#8f8f8f" width={3} /></IconButton>
        <RefreshCell><IconButton aria-label="Refresh"><RefreshIcon /></IconButton></RefreshCell>
      </Address>
      <SearchBox>
        <input placeholder="Search ssl" aria-label="Search ssl" />
        <SearchIcon />
      </SearchBox>
    </NavRow>
    <ToolRow>
      <ToolButton>Organize <Caret color="#dcdcdc" /></ToolButton>
      <Grow><ToolButton>New folder</ToolButton></Grow>
      <Controls $gap={32}>
        <ToolButton $gap={14} aria-label="View"><ViewIcon /><Caret color="#dcdcdc" /></ToolButton>
        <IconButton aria-label="Preview pane"><PaneIcon /></IconButton>
        <IconButton aria-label="Help"><HelpIcon /></IconButton>
      </Controls>
    </ToolRow>
    <Body>
      <Tree>
        <TreeGroup>
          {tree.pinned.map((t) => (
            <TreeItem key={t.name}>{t.icon}<TreeLabel>{t.name}</TreeLabel>{t.pin && <PinIcon />}</TreeItem>
          ))}
        </TreeGroup>
        <TreeGroup>
          <TreeItem $root><PcIcon /><TreeLabel>This PC</TreeLabel></TreeItem>
          {tree.pc.map((t) => (
            <TreeItem key={t.name} $selected={t.name === 'Desktop'}>{t.icon}<TreeLabel>{t.name}</TreeLabel></TreeItem>
          ))}
        </TreeGroup>
        <TreeItem $root><NetIcon /><TreeLabel>Network</TreeLabel></TreeItem>
      </Tree>
      <TreeScroll>
        <ScrollArrow $w={24} $h={33} aria-label="Scroll up"><Chevron dir="up" size={13} color="#777" /></ScrollArrow>
        <TreeGap />
        <TreeThumb />
        <Grow />
        <ScrollArrow $w={24} $h={26} aria-label="Scroll down"><Chevron dir="down" size={13} color="#777" /></ScrollArrow>
      </TreeScroll>
      <Splitter />
      <Content>
        <FileArea>
          <FileTable>
            <colgroup>
              <col style={{ width: 437 }} />
              <col style={{ width: 203 }} />
              <col />
            </colgroup>
            <thead>
              <tr>
                <th><HeadCell $pad={4}>Name<SortMark><Chevron dir="up" size={12} color="#aaa" width={1} /></SortMark></HeadCell></th>
                <th><HeadCell $pad={9}>Date modified</HeadCell></th>
                <th><HeadCell $pad={9} $last>Type</HeadCell></th>
              </tr>
            </thead>
            <tbody>
              {files.map((f, i) => (
                <FileTr key={f.name} $hover={i === 0}>
                  <td><FileName><FileIcon />{f.name}</FileName></td>
                  <td><DateText>{f.date}</DateText></td>
                  <td>PEM File</td>
                </FileTr>
              ))}
            </tbody>
          </FileTable>
        </FileArea>
        <HScroll>
          <ScrollArrow $w={26} $h={26} aria-label="Scroll left"><Chevron dir="left" size={13} color="#777" /></ScrollArrow>
          <HThumb />
          <Grow />
          <ScrollArrow $w={28} $h={26} aria-label="Scroll right"><Chevron dir="right" size={13} color="#777" /></ScrollArrow>
        </HScroll>
      </Content>
    </Body>
    <Footer>
      <FieldRow>
        <FieldLabel htmlFor="file-name">File name:</FieldLabel>
        <Combo>
          <input id="file-name" defaultValue={'"fullchain.pem" "privkey.pem"'} />
          <IconButton aria-label="File name history"><Chevron dir="down" size={12} color="#d0d0d0" width={1} /></IconButton>
        </Combo>
      </FieldRow>
      <ButtonRow>
        <DialogButton>Open</DialogButton>
        <DialogButton>Cancel</DialogButton>
      </ButtonRow>
    </Footer>
    <Grip><GripDots size={12} color="#bdbdbd" /></Grip>
    <Highlight $x={153} $y={45} $w={453} $h={51} />
    <Highlight $x={255} $y={187} $w={667} $h={78} />
    <Highlight $x={604} $y={647} $w={144} $h={46} />
    <Highlight $x={174} $y={602} $w={725} $h={47} />
    <Badge $x={620} $y={44}>3</Badge>
    <Badge $x={186} $y={198}>4</Badge>
    <Badge $x={105} $y={597}>5</Badge>
    <Badge $x={531} $y={653}>6</Badge>
  </Dialog>
);

export default function App() {
  return (
    <>
      <GlobalStyle />
      <Frame>
        <HostTitle>
          <VmIcon />
          <HostName>Windows 10 Jaringan Komputer Lanjut [Running] - Oracle VM VirtualBox</HostName>
          <Controls $gap={72}>
            <IconButton aria-label="Minimize"><Svg w={20} h={2}><path d="M0 1h20" stroke="#000" strokeWidth="2" /></Svg></IconButton>
            <IconButton aria-label="Maximize"><Svg w={20} h={20}><rect x="1" y="1" width="18" height="18" rx="2" stroke="#000" strokeWidth="2" /></Svg></IconButton>
            <IconButton aria-label="Close"><Cross size={20} color="#000" width={2} /></IconButton>
          </Controls>
        </HostTitle>
        <HostMenu>
          {['File', 'Machine', 'View', 'Input', 'Devices', 'Help'].map((m) => <button key={m}>{m}</button>)}
        </HostMenu>
        <Guest>
          <BoxTitle>
            <MikroTik size={24} id="mt-title" />
            <Grow>admin@192.168.20.1 (MikroTik) - WinBox (64bit) v7.14.2 on CHR (x86_64)</Grow>
            <Controls $gap={54}>
              <IconButton aria-label="Minimize"><Svg w={16} h={1}><path d="M0 .5h16" stroke="#999" /></Svg></IconButton>
              <IconButton aria-label="Restore"><Svg w={16} h={16}><path d="M.5 3.500h12v12H.5zM3.500 3.500v-3h12v12h-3" stroke="#999" /></Svg></IconButton>
              <IconButton aria-label="Close"><Cross size={17} color="#999" /></IconButton>
            </Controls>
          </BoxTitle>
          <BoxMenu>
            {['Session', 'Settings', 'Dashboard'].map((m) => <button key={m}>{m}</button>)}
          </BoxMenu>
          <BoxToolbar><CpuMeter /></BoxToolbar>
          <Workspace>
            <Brand>RouterOS WinBox</Brand>
            <SideMenu>
              <SideItem><DoorIcon />Exit</SideItem>
              <SideItem>
                <MonitorIcon />
                <Grow>Windows</Grow>
                <Svg w={9} h={17}><path d="M.5.500l8 8-8 8" fill="#fff" stroke="#aaa" /><path d="M.5 0v16.500" stroke="#777" /></Svg>
              </SideItem>
            </SideMenu>
          </Workspace>
          <Taskbar>
            <Apps>
              <AppButton aria-label="Start"><WinLogo /></AppButton>
              <AppButton aria-label="Settings"><GearIcon /></AppButton>
              <AppButton aria-label="Run"><RunIcon /></AppButton>
              <AppButton aria-label="File Explorer"><ExplorerIcon /></AppButton>
              <AppButton aria-label="Chrome" $open><ChromeIcon /></AppButton>
              <AppButton aria-label="WinBox" $active><MikroTik size={34} id="mt-task" /></AppButton>
              <AppButton aria-label="Command Prompt"><CmdIcon /></AppButton>
              <AppButton aria-label="PuTTY"><PuttyIcon /></AppButton>
              <AppButton aria-label="Server"><ServerIcon /></AppButton>
            </Apps>
            <Tray>
              <IconButton aria-label="Hidden icons"><Chevron dir="up" size={20} color="#fff" width={1} /></IconButton>
              <BatteryIcon />
              <EthernetIcon />
              <SoundIcon />
            </Tray>
            <Clock><span>3:11 PM</span><span>4/19/2024</span></Clock>
            <ShowDesktop aria-label="Show desktop" />
          </Taskbar>
          <FileListWindow />
          <UploadDialog />
        </Guest>
        <HostStatus>
          <StatusIcons />
          <span>Right Ctrl</span>
          <CornerGrip><GripDots size={24} color="#8a8a8a" /></CornerGrip>
        </HostStatus>
      </Frame>
    </>
  );
}
